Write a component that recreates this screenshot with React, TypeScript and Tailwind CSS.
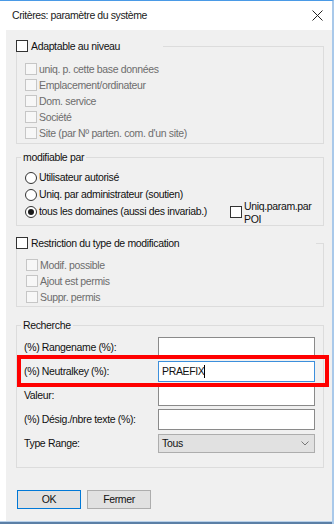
import React from 'react';

const font = { fontFamily: '"Liberation Sans", Arial, sans-serif' };

function Check({ disabled }: { disabled?: boolean }) {
  return (
    <span
      className={
        disabled
          ? 'block w-[12px] h-[12px] shrink-0 border border-[#c6c6c6] bg-[#f7f7f7]'
          : 'block w-[12px] h-[12px] shrink-0 border border-[#333333] bg-white'
      }
    />
  );
}

function Radio({ checked }: { checked?: boolean }) {
  return (
    <span className="flex w-[12px] h-[12px] shrink-0 items-center justify-center rounded-full border border-[#333333] bg-white">
      {checked && <span className="block w-[6px] h-[6px] rounded-full bg-[#1a1a1a]" />}
    </span>
  );
}

function DisabledRow({ label }: { label: string }) {
  return (
    <div className="flex h-[16px] items-center gap-[2px]">
      <Check disabled />
      <span className="text-[#6d6d6d]">{label}</span>
    </div>
  );
}

function Field({ label, children }: { label: string; children: React.ReactNode }) {
  return (
    <div className="flex h-[21px] items-center">
      <span className="w-[134px] shrink-0 text-[#111111]">{label}</span>
      {children}
    </div>
  );
}

export default function App() {
  return (
    <div
      className="flex h-[524px] w-[334px] flex-col border-t border-r-2 border-t-[#4a9ae6] border-r-[#a9c9ea] bg-white text-[10.5px] leading-[13px] tracking-[-0.35px] text-[#111111]"
      style={font}
    >
      {/* title bar */}
      <div className="flex h-[29px] shrink-0 items-center justify-between pl-[12px] pr-[9px]">
        <span className="text-[10.5px] tracking-[-0.4px] text-[#1a1a1a]">Critères: paramètre du système</span>
        <svg width="11" height="11" viewBox="0 0 11 11">
          <path d="M0.5 0.5 L10.5 10.5 M10.5 0.5 L0.5 10.5" stroke="#222" strokeWidth="1" />
        </svg>
      </div>

      {/* dialog body */}
      <div className="ml-[6px] flex flex-1 flex-col bg-[#f0f0f0]">
        {/* Adaptable au niveau */}
        <fieldset className="ml-[10px] mt-[10px] w-[308px] border border-[#dcdcdc]">
          <legend className="ml-[-1px] w-[147px]">
            <div className="flex h-[12px] items-center gap-[3px]">
              <Check />
              <span>Adaptable au niveau</span>
            </div>
          </legend>
          <div className="pl-[8px] pt-[9px] pb-[2px]">
            <DisabledRow label="uniq. p. cette base données" />
            <DisabledRow label="Emplacement/ordinateur" />
            <DisabledRow label="Dom. service" />
            <DisabledRow label="Société" />
            <DisabledRow label="Site (par Nº parten. com. d'un site)" />
          </div>
        </fieldset>

        {/* modifiable par */}
        <fieldset className="ml-[10px] mt-[6px] w-[308px] border border-[#dcdcdc]">
          <legend className="ml-[4px] px-[2px]">
            <div className="flex h-[14px] items-center">modifiable par</div>
          </legend>
          <div className="pl-[8px] pt-[5px] pb-[5px]">
            <div className="flex h-[17px] items-center gap-[2px]">
              <Radio />
              <span>Utilisateur autorisé</span>
            </div>
            <div className="flex h-[17px] items-center gap-[2px]">
              <Radio />
              <span>Uniq. par administrateur (soutien)</span>
            </div>
            <div className="flex h-[17px] items-center">
              <div className="flex w-[205px] items-center gap-[2px]">
                <Radio checked />
                <span>tous les domaines (aussi des invariab.)</span>
              </div>
              <div className="flex items-center gap-[2px]">
                <Check />
                <span className="mt-[2px] leading-[13px]">
                  Uniq.param.par
                  <br />
                  POI
                </span>
              </div>
            </div>
          </div>
        </fieldset>

        {/* Restriction du type de modification */}
        <fieldset className="ml-[10px] mt-[11px] w-[308px] border border-[#dcdcdc]">
          <legend className="ml-[-1px] w-[300px]">
            <div className="flex h-[12px] items-center gap-[3px]">
              <Check />
              <span>Restriction du type de modification</span>
            </div>
          </legend>
          <div className="pl-[9px] pt-[8px] pb-[1px]">
            <DisabledRow label="Modif. possible" />
            <DisabledRow label="Ajout est permis" />
            <DisabledRow label="Suppr. permis" />
          </div>
        </fieldset>

        {/* Recherche */}
        <fieldset className="ml-[10px] mt-[11px] w-[308px] border border-[#dcdcdc]">
          <legend className="ml-[4px] px-[2px]">
            <div className="flex h-[14px] items-center">Recherche</div>
          </legend>
          <div className="flex flex-col gap-[3px] pl-[7px] pt-[5px] pb-[13px]">
            <Field label="(%) Rangename (%):">
              <div className="h-[21px] w-[157px] border border-[#8a8a8a] bg-white" />
            </Field>
            <div className="relative">
              <Field label="(%) Neutralkey (%):">
                <div className="flex h-[21px] w-[157px] items-center border border-[#3c8fdc] bg-white pl-[3px]">
                  <span>PRAEFIX</span>
                  <span className="block h-[13px] w-px bg-black" />
                </div>
              </Field>
              <div className="pointer-events-none absolute -top-[6px] -bottom-[5px] -left-[7px] -right-[6px] border-4 border-[#ff0000]" />
            </div>
            <Field label="Valeur:">
              <div className="h-[21px] w-[157px] border border-[#8a8a8a] bg-white" />
            </Field>
            <Field label="(%) Désig./nbre texte (%):">
              <div className="h-[21px] w-[157px] border border-[#8a8a8a] bg-white" />
            </Field>
            <Field label="Type Range:">
              <div className="flex h-[19px] w-[157px] items-center justify-between border border-[#adadad] bg-[#e1e1e1] pl-[3px] pr-[5px]">
                <span>Tous</span>
                <svg width="8" height="5" viewBox="0 0 8 5">
                  <path d="M0.5 0.5 L4 4 L7.5 0.5" stroke="#777" strokeWidth="1" fill="none" />
                </svg>
              </div>
            </Field>
          </div>
        </fieldset>

        {/* buttons */}
        <div className="ml-[11px] mt-[22px] flex gap-[6px]">
          <button className="h-[19px] w-[64px] border border-[#0078d7] bg-[#e1e1e1] text-[10.5px] text-[#111111]">
            OK
          </button>
          <button className="h-[19px] w-[64px] border border-[#adadad] bg-[#e1e1e1] text-[10.5px] text-[#111111]">
            Fermer
          </button>
        </div>
      </div>

      {/* bottom frame */}
      <div className="h-px shrink-0 bg-[#b7d0ea]" />
      <div className="h-[2px] shrink-0 bg-[#5b7fa6]" />
    </div>
  );
}
